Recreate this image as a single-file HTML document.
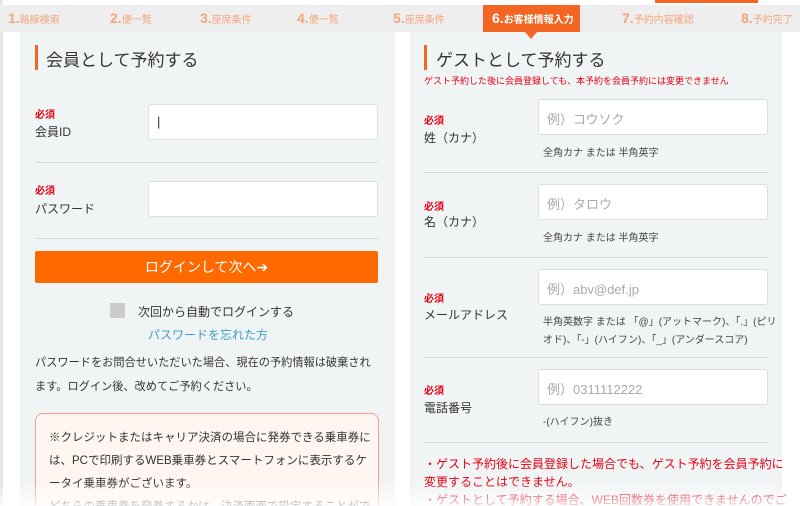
<!DOCTYPE html><html><head><meta charset="utf-8"><style>
*{margin:0;padding:0;box-sizing:border-box}
html,body{width:800px;height:506px;overflow:hidden}
body{background:#fff;font-family:"Liberation Sans","Noto Sans CJK JP",sans-serif;color:#333;position:relative}
.a{position:absolute;white-space:nowrap}
.nav{position:absolute;left:0;top:5px;width:800px;height:27px;background:#eeeeee}
.nav span{position:absolute;top:5px;color:#f5a57a;font-size:10px}
.nav b{font-size:14px;font-weight:bold}
.panel{position:absolute;top:32px;background:#f1f4f5;height:474px}
.bar{position:absolute;width:3px;height:25px;background:#f26522}
.h{font-size:17px;color:#333}
.req{font-size:10px;color:#e60012;font-weight:bold}
.lb{font-size:12px;color:#333}
.in{position:absolute;background:#fff;border:1px solid #dcdfe0;border-radius:3px;height:36px;font-size:13px;color:#aaa;padding:9px 0 0 8px}
.hr{position:absolute;height:1px;background:#d8dadb}
.hint{font-size:10px;color:#444}
.red{font-size:12px;color:#e60012}
</style></head><body>
<div class="a" style="left:0;top:0;width:3px;height:506px;background:#e6e6e6"></div>
<div class="a" style="left:655px;top:0;width:103px;height:3px;background:#f26522"></div>
<div class="nav">
<span style="left:8px"><b>1.</b>路線検索</span>
<span style="left:110px"><b>2.</b>便一覧</span>
<span style="left:200px"><b>3.</b>座席条件</span>
<span style="left:297px"><b>4.</b>便一覧</span>
<span style="left:393px"><b>5.</b>座席条件</span>
<span style="left:622px"><b>7.</b>予約内容確認</span>
<span style="left:741px"><b>8.</b>予約完了</span>
</div>
<div class="a" style="left:483px;top:5px;width:97px;height:28px;background:#f26522;color:#fff;font-size:10px;padding:5px 0 0 9px"><b style="font-size:14px">6.</b><b>お客様情報入力</b></div>
<div class="panel" style="left:20px;width:375px"></div>
<div class="panel" style="left:410px;width:372px"></div>
<div class="a" style="left:525px;top:32px;width:0;height:0;border-left:6px solid transparent;border-right:6px solid transparent;border-top:7px solid #f26522"></div>
<!-- left -->
<div class="bar" style="left:35px;top:45px"></div>
<div class="a h" style="left:46px;top:46px">会員として予約する</div>
<div class="a req" style="left:35px;top:106px">必須</div>
<div class="a lb" style="left:35px;top:123px">会員ID</div>
<div class="in" style="left:148px;top:104px;width:230px;color:#333">|</div>
<div class="hr" style="left:35px;top:162px;width:343px"></div>
<div class="a req" style="left:35px;top:182px">必須</div>
<div class="a lb" style="left:35px;top:200px">パスワード</div>
<div class="in" style="left:148px;top:181px;width:230px"></div>
<div class="hr" style="left:35px;top:238px;width:343px"></div>
<div class="a" style="left:35px;top:251px;width:343px;height:32px;background:#ff6a00;border-radius:2px;color:#fff;font-size:14px;text-align:center;line-height:32px">ログインして次へ➔</div>
<div class="a" style="left:110px;top:303px;width:15px;height:15px;background:#ccc"></div>
<div class="a" style="left:138px;top:303px;font-size:12px">次回から自動でログインする</div>
<div class="a" style="left:148px;top:326px;font-size:12px;color:#3a9ec9">パスワードを忘れた方</div>
<div class="a" style="left:35px;top:351px;font-size:11.2px;line-height:24px">パスワードをお問合せいただいた場合、現在の予約情報は破棄され<br>ます。ログイン後、改めてご予約ください。</div>
<div class="a" style="left:35px;top:413px;width:344px;height:110px;border:1px solid #f3a090;border-radius:8px;background:#fff6f2;padding:13px 0 0 13px;font-size:11.5px;line-height:23px">※クレジットまたはキャリア決済の場合に発券できる乗車券に<br>は、PCで印刷するWEB乗車券とスマートフォンに表示するケ<br>ータイ乗車券がございます。<br>どちらの乗車券を発券するかは、決済画面で設定することがで<br>きます。</div>
<!-- right -->
<div class="bar" style="left:424px;top:45px"></div>
<div class="a h" style="left:436px;top:46px">ゲストとして予約する</div>
<div class="a" style="left:424px;top:74px;font-size:9px;color:#e60012">ゲスト予約した後に会員登録しても、本予約を会員予約には変更できません</div>
<div class="a req" style="left:424px;top:112px">必須</div>
<div class="a lb" style="left:424px;top:129px">姓（カナ）</div>
<div class="in" style="left:538px;top:99px;width:230px">例）コウソク</div>
<div class="a hint" style="left:543px;top:144px">全角カナ または 半角英字</div>
<div class="hr" style="left:424px;top:172px;width:344px"></div>
<div class="a req" style="left:424px;top:198px">必須</div>
<div class="a lb" style="left:424px;top:213px">名（カナ）</div>
<div class="in" style="left:538px;top:184px;width:230px">例）タロウ</div>
<div class="a hint" style="left:543px;top:229px">全角カナ または 半角英字</div>
<div class="hr" style="left:424px;top:257px;width:344px"></div>
<div class="a req" style="left:424px;top:290px">必須</div>
<div class="a lb" style="left:424px;top:306px">メールアドレス</div>
<div class="in" style="left:538px;top:269px;width:230px">例）abv@def.jp</div>
<div class="a hint" style="left:543px;top:314px;line-height:18px">半角英数字 または 「@」(アットマーク)、「.」(ピリ<br>オド)、「-」(ハイフン)、「_」(アンダースコア)</div>
<div class="hr" style="left:424px;top:357px;width:344px"></div>
<div class="a req" style="left:424px;top:382px">必須</div>
<div class="a lb" style="left:424px;top:399px">電話番号</div>
<div class="in" style="left:538px;top:369px;width:230px">例）0311112222</div>
<div class="a hint" style="left:543px;top:413px">-(ハイフン)抜き</div>
<div class="hr" style="left:424px;top:442px;width:344px"></div>
<div class="a red" style="left:424px;top:455px;line-height:18px">・ゲスト予約後に会員登録した場合でも、ゲスト予約を会員予約に<br>変更することはできません。<br>・ゲストとして予約する場合、WEB回数券を使用できませんのでご</div>
<div class="a" style="left:0;top:482px;width:800px;height:24px;background:linear-gradient(rgba(255,255,255,0),rgba(255,255,255,0.8))"></div>
</body></html>
